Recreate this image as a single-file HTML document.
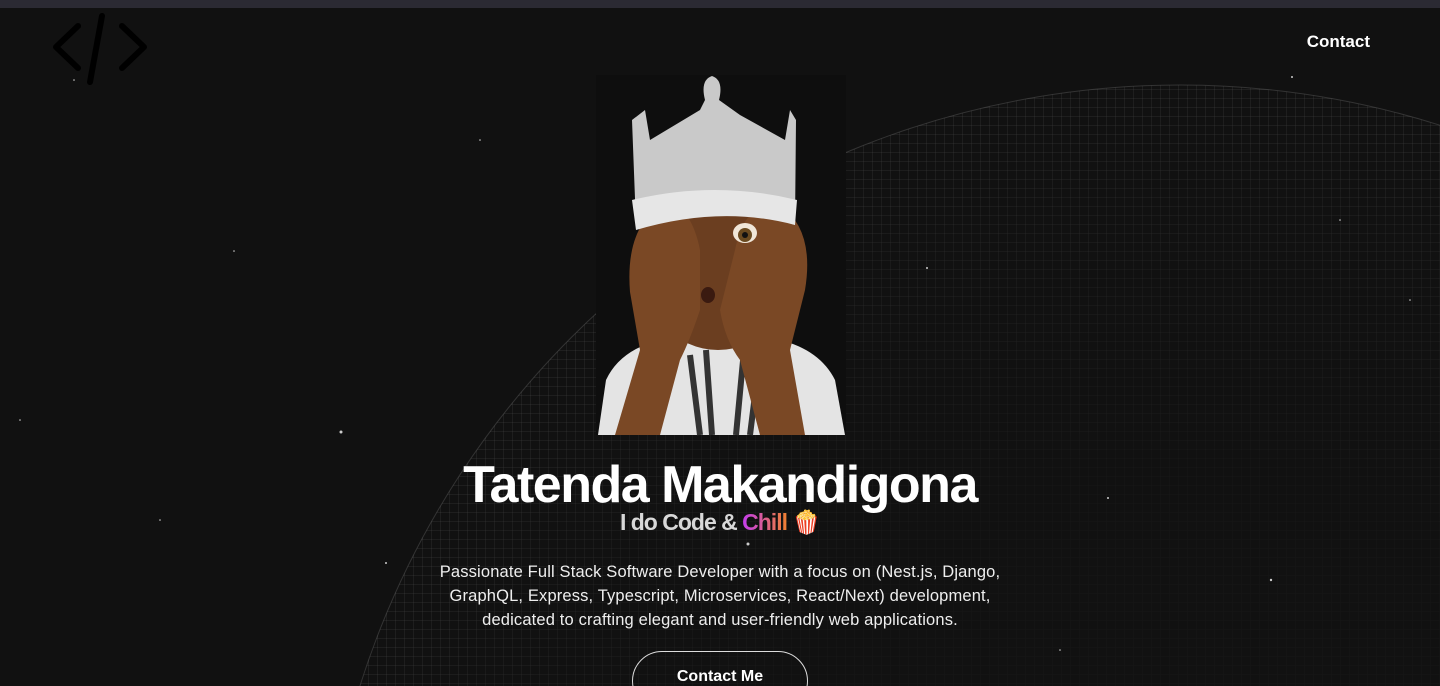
<!DOCTYPE html>
<html><head><meta charset="utf-8"><style>
*{margin:0;padding:0;box-sizing:border-box}
html,body{width:1440px;height:686px;overflow:hidden}
body{background:#111111;font-family:"Liberation Sans",sans-serif;color:#fff;position:relative}
.top{position:absolute;left:0;top:0;width:1440px;height:8px;background:#2b2a33}
.nav{position:absolute;right:70px;top:32px;font-size:17px;font-weight:bold}
h1{position:absolute;left:0;width:1440px;top:455px;text-align:center;font-size:52px;font-weight:bold;letter-spacing:-1.5px}
.sub{position:absolute;left:0;width:1440px;top:509px;text-align:center;font-size:23px;font-weight:bold;color:#d8d8d8;letter-spacing:-1px}
.chill{background:linear-gradient(90deg,#c43df0,#f08030);-webkit-background-clip:text;color:transparent}
p{position:absolute;left:415px;width:610px;top:560px;text-align:center;font-size:16.5px;line-height:24px;color:#eee;letter-spacing:0.15px}
.btn{position:absolute;left:632px;top:651px;width:176px;height:60px;border:1.5px solid #ddd;border-radius:30px;text-align:center;padding-top:16px;font-weight:bold;font-size:16px}
</style></head><body>
<svg width="1440" height="686" style="position:absolute;left:0;top:0">
<defs>
<pattern id="g" width="9" height="9" patternUnits="userSpaceOnUse"><path d="M9 0V9M0 9H9" stroke="#777" stroke-width="0.5" fill="none"/></pattern>
<radialGradient id="m" cx="1180" cy="945" r="860" gradientUnits="userSpaceOnUse"><stop offset="0.5" stop-color="#fff" stop-opacity="0.1"/><stop offset="0.85" stop-color="#fff" stop-opacity="0.35"/><stop offset="1" stop-color="#fff" stop-opacity="0.55"/></radialGradient>
<mask id="mk"><circle cx="1180" cy="945" r="860" fill="url(#m)"/></mask>
</defs>
<g mask="url(#mk)"><rect width="1440" height="686" fill="url(#g)"/></g>
<circle cx="1180" cy="945" r="860" fill="none" stroke="#555" stroke-width="1" opacity="0.5"/>
<g fill="#ccc">
<circle cx="341" cy="432" r="1.5"/><circle cx="927" cy="268" r="1"/><circle cx="1292" cy="77" r="1"/><circle cx="1271" cy="580" r="1.2"/><circle cx="386" cy="563" r="1"/><circle cx="748" cy="544" r="1.5"/><circle cx="1108" cy="498" r="1"/><circle cx="234" cy="251" r="0.8"/><circle cx="74" cy="80" r="0.8"/><circle cx="1410" cy="300" r="0.8"/><circle cx="160" cy="520" r="0.8"/><circle cx="1340" cy="220" r="0.8"/><circle cx="1060" cy="650" r="0.8"/><circle cx="480" cy="140" r="0.8"/><circle cx="20" cy="420" r="0.8"/>
</g>
<path d="M78 26L56 47L78 68M122 26L144 47L122 68M102 16L90 82" stroke="#000" stroke-width="6" stroke-linecap="round" stroke-linejoin="round" fill="none"/>
<rect x="596" y="75" width="250" height="360" fill="#0e0e0e"/>
<path d="M598 435L606 380Q620 350 660 340L780 340Q820 350 835 380L845 435Z" fill="#e4e4e4"/>
<path d="M690 355L700 435M706 350L712 435M744 350L736 435M760 355L750 435" stroke="#333" stroke-width="6"/>
<ellipse cx="718" cy="265" rx="78" ry="85" fill="#6b3e20"/>
<path d="M630 292Q625 230 660 205Q690 200 700 250L700 310Q690 340 680 360L660 435L615 435L640 350Z" fill="#7a4825"/>
<path d="M805 290Q815 230 780 205Q745 200 735 250L720 310Q725 340 740 360L760 435L805 435L790 350Z" fill="#7a4825"/>
<ellipse cx="745" cy="233" rx="12" ry="10" fill="#f0e6d8"/><circle cx="745" cy="235" r="7" fill="#6a4a20"/><circle cx="745" cy="235" r="3" fill="#111"/>
<ellipse cx="708" cy="295" rx="7" ry="8" fill="#3a1a10"/>
<path d="M636 225L632 120L645 110L650 140L700 110L705 100Q700 80 712 76Q724 80 719 100L740 115L785 140L790 110L796 120L795 225Q720 200 636 225Z" fill="#c9c9c9"/>
<path d="M632 200Q715 180 797 200L795 225Q720 205 636 230Z" fill="#e6e6e6"/>
</svg>
<div class="top"></div>
<div class="nav">Contact</div>
<h1>Tatenda Makandigona</h1>
<div class="sub">I do Code &amp; <span class="chill">Chill</span> 🍿</div>
<p>Passionate Full Stack Software Developer with a focus on (Nest.js, Django, GraphQL, Express, Typescript, Microservices, React/Next) development, dedicated to crafting elegant and user-friendly web applications.</p>
<div class="btn">Contact Me</div>
</body></html>
